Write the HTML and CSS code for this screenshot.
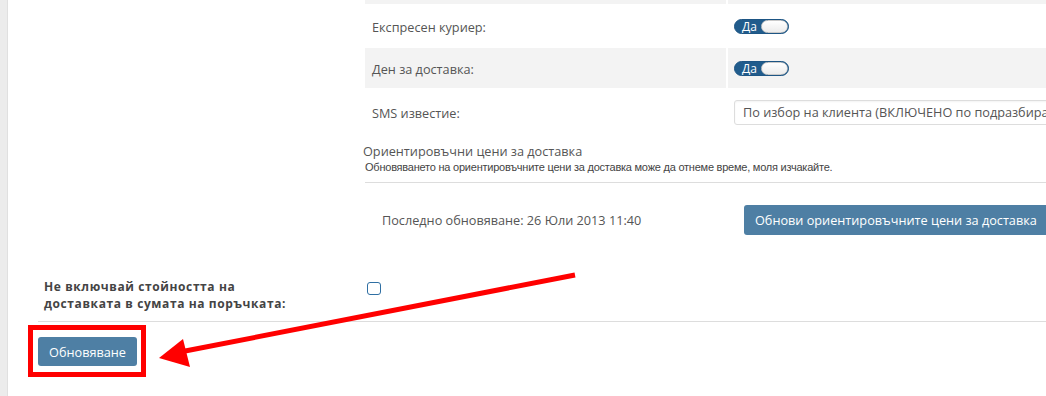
FILE: index.html
```html
<!DOCTYPE html>
<html>
<head>
  <title>Настройки за доставка</title>
  <link rel="stylesheet" href="styles.css">
</head>
<body>
  <div class="page">
    <div class="sidebar"></div>

    <div class="content">
      <div class="form-row">
        <div class="form-label"></div>
        <div class="form-field">
          <div class="opt-table">
            <div class="opt-cell cut"></div>
            <div class="opt-cell cut"></div>

            <div class="opt-cell opt-name">Експресен куриер:</div>
            <div class="opt-cell opt-value">
              <span class="toggle"><span class="toggle-on">Да</span><span class="toggle-knob"></span></span>
            </div>

            <div class="opt-cell opt-name shaded">Ден за доставка:</div>
            <div class="opt-cell opt-value shaded">
              <span class="toggle"><span class="toggle-on">Да</span><span class="toggle-knob"></span></span>
            </div>

            <div class="opt-cell opt-name tall">SMS известие:</div>
            <div class="opt-cell opt-value tall">
              <div class="select">По избор на клиента (ВКЛЮЧЕНО по подразбиране)</div>
            </div>
          </div>

          <div class="prices">
            <h4 class="prices-title">Ориентировъчни цени за доставка</h4>
            <p class="prices-note">Обновяването на ориентировъчните цени за доставка може да отнеме време, моля изчакайте.</p>
            <div class="prices-update">
              <div class="last-update">Последно обновяване: 26 Юли 2013 11:40</div>
              <div class="update-action">
                <button class="btn" type="button">Обнови ориентировъчните цени за доставка</button>
              </div>
            </div>
          </div>
        </div>
      </div>

      <div class="form-row row-check">
        <div class="form-label strong">Не включвай стойността на доставката в сумата на поръчката:</div>
        <div class="form-field">
          <input class="check" type="checkbox">
        </div>
      </div>

      <div class="submit">
        <button class="btn" type="button">Обновяване</button>
        <span class="highlight"></span>
      </div>
    </div>

    <svg class="arrow" width="1046" height="396" viewBox="0 0 1046 396">
      <line x1="575" y1="275" x2="180" y2="352" stroke="#ff0000" stroke-width="5"/>
      <polygon points="159,358 183,339 190,367" fill="#ff0000"/>
    </svg>
  </div>
</body>
</html>
```

FILE: styles.css
```css
body {
  margin: 0;
  padding: 0;
  font-family: "Open Sans", Arial, sans-serif;
  font-size: 12.7px;
  color: #555;
  background: #fff;
  overflow: hidden;
}

.page {
  position: relative;
  display: flex;
  width: 1046px;
  height: 396px;
  overflow: hidden;
}

.sidebar {
  flex: 0 0 7px;
  background-color: #ececec;
  border-right: 1px solid #e0e0e0;
}

.content {
  flex: 0 0 auto;
  width: 1100px;
  padding-left: 30px;
}

/* form rows */
.form-row {
  display: grid;
  grid-template-columns: 325px 1fr;
}

.form-label {
  padding-left: 6px;
}

.form-label.strong {
  width: 250px;
  font-weight: bold;
  font-size: 12px;
  letter-spacing: 0.6px;
  line-height: 17px;
  color: #444;
}

/* nested options table */
.opt-table {
  display: grid;
  grid-template-columns: 361px 340px;
  gap: 2px;
  padding-left: 2px;
}

.opt-cell {
  height: 40px;
  display: flex;
  align-items: center;
}

.opt-cell.cut {
  height: 4px;
  background-color: #f3f3f3;
}

.opt-cell.shaded {
  background-color: #f3f3f3;
}

.opt-cell.tall {
  height: 45px;
  align-items: flex-start;
  padding-top: 10px;
  box-sizing: border-box;
}

.opt-name {
  padding-left: 7px;
  padding-top: 2px;
  box-sizing: border-box;
}

.opt-name.tall {
  padding-top: 14px;
}

.opt-value {
  padding-left: 6px;
}

.toggle {
  display: flex;
  align-items: center;
  width: 55px;
  height: 15px;
  box-sizing: border-box;
  border-radius: 8px;
  background-color: #215c8c;
  border: 1px solid #1d5584;
  overflow: hidden;
}

.toggle-on {
  width: 26px;
  padding-left: 7px;
  box-sizing: border-box;
  color: #fff;
  font-size: 12px;
  line-height: 13px;
}

.toggle-knob {
  flex: 1;
  height: 13px;
  border-radius: 7px;
  background: linear-gradient(#fff, #ececec);
  border: 1px solid #c9c9c9;
  box-sizing: border-box;
}

.select {
  width: 330px;
  height: 25px;
  box-sizing: border-box;
  border: 1px solid #ddd;
  border-radius: 3px;
  padding-left: 8px;
  line-height: 23px;
  white-space: nowrap;
  overflow: hidden;
  box-shadow: inset 0 1px 2px rgba(0, 0, 0, 0.05);
}

/* shipping prices block */
.prices-title {
  margin: 7px 0 0;
  font-weight: normal;
  font-size: 12.7px;
  line-height: 18px;
}

.prices-note {
  margin: 0 0 0 2px;
  font-family: "Liberation Sans", Arial, sans-serif;
  font-size: 11px;
  letter-spacing: -0.23px;
  line-height: 15px;
  color: #444;
  padding-bottom: 7px;
  border-bottom: 1px solid #ddd;
  width: 681px;
}

.prices-update {
  display: grid;
  grid-template-columns: 363px 1fr;
  padding: 22px 0 0;
  height: 30px;
}

.last-update {
  padding-left: 19px;
  line-height: 30px;
}

.update-action {
  padding-left: 18px;
}

.btn {
  height: 30px;
  padding: 0 11px;
  border: none;
  border-radius: 3px;
  background-color: #4e7fa4;
  color: #fff;
  font-family: "Open Sans", Arial, sans-serif;
  font-size: 12.7px;
  white-space: nowrap;
  cursor: pointer;
}

/* checkbox row */
.row-check {
  margin-top: 43px;
  padding-bottom: 9px;
  border-bottom: 1px solid #ddd;
  width: 1008px;
}

.row-check .form-field {
  padding-left: 4px;
  padding-top: 4px;
}

.check {
  display: block;
  -webkit-appearance: none;
  appearance: none;
  margin: 0;
  width: 14px;
  height: 13px;
  border: 1px solid #2f6fa3;
  border-radius: 3px;
  background: #fff;
}

/* submit */
.submit {
  position: relative;
  margin: 15px 0 0;
}

.submit .btn {
  height: 29px;
  width: 99px;
  padding: 0;
}

.highlight {
  position: absolute;
  left: -10px;
  top: -12px;
  width: 118px;
  height: 52px;
  box-sizing: border-box;
  border: 5px solid #ff0000;
}

.arrow {
  position: absolute;
  left: 0;
  top: 0;
}
```
